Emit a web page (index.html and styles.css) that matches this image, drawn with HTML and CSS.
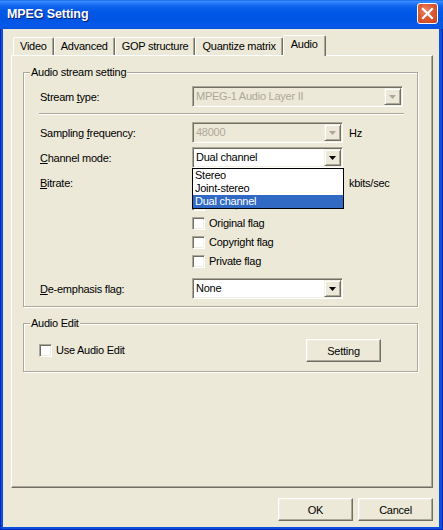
FILE: index.html
```html
<!DOCTYPE html>
<html>
<head>
<meta charset="utf-8">
<title>MPEG Setting</title>
<link rel="stylesheet" href="styles.css">
</head>
<body>
<div class="window">
  <div class="titlebar">
    <span class="title">MPEG Setting</span>
    <div class="close" aria-label="Close">
      <svg width="19" height="19" viewBox="0 0 19 19"><path d="M5 5 L14 14 M14 5 L5 14" stroke="#fff" stroke-width="2.2" stroke-linecap="square"/></svg>
    </div>
  </div>
  <div class="client">
    <div class="tabs">
      <div class="tab">Video</div>
      <div class="tab">Advanced</div>
      <div class="tab">GOP structure</div>
      <div class="tab">Quantize matrix</div>
      <div class="tab tab-active">Audio</div>
    </div>
    <div class="panel">
      <fieldset class="group group-stream">
        <legend class="legend legend-stream">Audio stream setting</legend>
        <div class="row">
          <span class="lbl">Stream <u>t</u>ype:</span>
          <div class="combo combo-wide combo-disabled">
            <span class="combo-text">MPEG-1 Audio Layer II</span>
            <span class="combo-btn"><svg class="arrow" width="7" height="4" viewBox="0 0 7 4"><path d="M0 0H7L3.5 4Z"/></svg></span>
          </div>
        </div>
        <div class="sep"></div>
        <div class="row">
          <span class="lbl">Sampling <u>f</u>requency:</span>
          <div class="combo combo-disabled">
            <span class="combo-text">48000</span>
            <span class="combo-btn"><svg class="arrow" width="7" height="4" viewBox="0 0 7 4"><path d="M0 0H7L3.5 4Z"/></svg></span>
          </div>
          <span class="unit">Hz</span>
        </div>
        <div class="row row-gap">
          <span class="lbl"><u>C</u>hannel mode:</span>
          <div class="combo">
            <span class="combo-text">Dual channel</span>
            <span class="combo-btn"><svg class="arrow" width="7" height="4" viewBox="0 0 7 4"><path d="M0 0H7L3.5 4Z"/></svg></span>
            <div class="dropdown">
              <div class="option">Stereo</div>
              <div class="option">Joint-stereo</div>
              <div class="option option-selected">Dual channel</div>
            </div>
          </div>
        </div>
        <div class="row row-gap">
          <span class="lbl"><u>B</u>itrate:</span>
          <div class="combo-space"></div>
          <span class="unit">kbits/sec</span>
        </div>
        <div class="check-row check-first">
          <span class="checkbox checkbox-disabled"></span>
          <span class="check-label check-label-disabled">Error protection</span>
        </div>
        <div class="check-row">
          <span class="checkbox"></span>
          <span class="check-label">Original flag</span>
        </div>
        <div class="check-row">
          <span class="checkbox"></span>
          <span class="check-label">Copyright flag</span>
        </div>
        <div class="check-row">
          <span class="checkbox"></span>
          <span class="check-label">Private flag</span>
        </div>
        <div class="row row-last">
          <span class="lbl"><u>D</u>e-emphasis flag:</span>
          <div class="combo">
            <span class="combo-text">None</span>
            <span class="combo-btn"><svg class="arrow" width="7" height="4" viewBox="0 0 7 4"><path d="M0 0H7L3.5 4Z"/></svg></span>
          </div>
        </div>
      </fieldset>
      <fieldset class="group group-edit">
        <legend class="legend legend-edit">Audio Edit</legend>
        <div class="edit-row">
          <span class="checkbox"></span>
          <span class="check-label">Use Audio Edit</span>
          <button class="btn btn-setting">Setting</button>
        </div>
      </fieldset>
    </div>
    <div class="actions">
      <button class="btn">OK</button>
      <button class="btn">Cancel</button>
    </div>
  </div>
</div>
</body>
</html>
```
FILE: styles.css
```css
* { box-sizing: border-box; }
html, body { margin: 0; padding: 0; }
body {
  width: 443px;
  height: 530px;
  overflow: hidden;
  font-family: "Liberation Sans", Arial, sans-serif;
  font-size: 11px;
  letter-spacing: -0.25px;
  color: #000;
  background: #0A4EE4;
}
.window {
  width: 443px;
  height: 530px;
  display: flex;
  flex-direction: column;
  background: #0B4FE2;
  box-shadow: inset 1px 0 #0028B8, inset -1px 0 #0028B8, inset 0 -1px #0028B8;
}
.titlebar {
  height: 29px;
  flex: none;
  display: flex;
  align-items: flex-start;
  padding: 0 5px 0 7px;
  background: linear-gradient(180deg, #0A5AE8 0px, #3B8FFD 1px, #2A7CF8 3px, #1064EE 6px, #0058E6 12px, #0055E3 20px, #0659EA 25px, #0A52DE 29px);
}
.title {
  margin-top: 7px;
  font-size: 12.5px;
  font-weight: bold;
  letter-spacing: -0.1px;
  color: #fff;
  line-height: 15px;
  text-shadow: 1px 1px 0 #0A1C7A;
}
.close {
  margin-left: auto;
  margin-top: 3px;
  width: 21px;
  height: 21px;
  border: 1px solid #fff;
  border-radius: 3px;
  background: radial-gradient(circle at 40% 35%, #E98A6C 0%, #DB5A34 45%, #C8401A 100%);
  display: flex;
  align-items: center;
  justify-content: center;
}
.client {
  flex: 1;
  margin: 0 4px 3px 3px;
  background: #ECE9D8;
  padding: 6px 6px 6px 8px;
  display: flex;
  flex-direction: column;
}
.tabs {
  display: flex;
  align-items: flex-end;
  padding-left: 2px;
  height: 20px;
  flex: none;
}
.tab {
  height: 18px;
  line-height: 16px;
  padding: 0 6px;
  border: 1px solid;
  border-bottom: none;
  border-color: #fff #716F64 transparent #fff;
  border-radius: 2px 2px 0 0;
  box-shadow: inset -1px 0 #ACA899;
  background: #ECE9D8;
  white-space: nowrap;
}
.tab-active {
  position: relative;
  z-index: 2;
  height: 21px;
  line-height: 17px;
  margin-bottom: -1px;
  padding: 0 7px;
}
.panel {
  flex: 1;
  border: 1px solid;
  border-color: #fff #716F64 #716F64 #fff;
  box-shadow: inset -1px -1px #ACA899;
  padding: 10px 14px 0 11px;
}
.group {
  margin: 0;
  border: 1px solid #ACA899;
  box-shadow: 1px 1px 0 #fff, inset 1px 1px 0 #fff;
  min-inline-size: 0;
}
.group-stream {
  padding: 7px 10px 7px 16px;
}
.group-edit {
  margin-top: 10px;
  padding: 9px 36px 9px 15px;
}
.legend {
  padding: 0 1px;
  line-height: 13px;
  background: #ECE9D8;
}
.legend-stream { margin-left: -10px; }
.legend-edit { margin-left: -9px; }
.row {
  display: flex;
  align-items: center;
  height: 21px;
}
.row-gap { margin-top: 4px; }
.row-last { margin-top: 10px; }
.lbl {
  width: 152px;
  flex: none;
  white-space: nowrap;
}
.sep {
  height: 2px;
  margin: 6px 0 7px -1px;
  width: 365px;
  border-top: 1px solid #ACA899;
  border-bottom: 1px solid #fff;
}
.combo {
  position: relative;
  width: 151px;
  height: 21px;
  flex: none;
  display: flex;
  align-items: stretch;
  background: #fff;
  border: 1px solid;
  border-color: #ACA899 #fff #fff #ACA899;
  box-shadow: inset 1px 1px 0 #716F64, inset -1px -1px 0 #F1EFE2;
  padding: 1px;
}
.combo-wide { width: 211px; }
.combo-disabled { background: #ECE9D8; color: #ACA899; }
.combo-space { width: 151px; height: 21px; flex: none; }
.combo-text {
  flex: 1;
  line-height: 17px;
  padding-left: 2px;
  white-space: nowrap;
  overflow: hidden;
}
.combo-btn {
  width: 17px;
  flex: none;
  display: flex;
  align-items: center;
  justify-content: center;
  background: #ECE9D8;
  border: 1px solid;
  border-color: #F1EFE2 #716F64 #716F64 #F1EFE2;
  box-shadow: inset 1px 1px 0 #fff, inset -1px -1px 0 #ACA899;
}
.arrow { fill: #000; display: block; }
.combo-disabled .arrow { fill: #ACA899; }
.unit { margin-left: 6px; white-space: nowrap; }
.dropdown {
  position: absolute;
  top: 20px;
  left: -1px;
  width: 152px;
  background: #fff;
  border: 1px solid #000;
  z-index: 5;
  color: #000;
}
.option {
  height: 13px;
  line-height: 13px;
  padding-left: 2px;
  white-space: nowrap;
}
.option-selected { background: #316AC5; color: #fff; }
.check-row {
  display: flex;
  align-items: center;
  height: 13px;
  margin-left: 152px;
  margin-top: 6px;
}
.check-first { margin-top: 5px; }
.checkbox {
  width: 13px;
  height: 13px;
  flex: none;
  background: #fff;
  border: 1px solid;
  border-color: #ACA899 #fff #fff #ACA899;
  box-shadow: inset 1px 1px 0 #716F64, inset -1px -1px 0 #F1EFE2;
}
.checkbox-disabled { background: #ECE9D8; }
.check-label {
  margin-left: 4px;
  line-height: 13px;
  white-space: nowrap;
}
.check-label-disabled { color: #ACA899; }
.edit-row {
  display: flex;
  align-items: center;
  height: 23px;
}
.btn {
  width: 75px;
  height: 23px;
  padding: 0;
  font: inherit;
  letter-spacing: inherit;
  color: #000;
  background: #ECE9D8;
  border: 1px solid;
  border-color: #fff #716F64 #716F64 #fff;
  box-shadow: inset -1px -1px 0 #ACA899, inset 1px 1px 0 #F1EFE2;
  border-radius: 0;
}
.btn-setting { margin-left: auto; }
.actions {
  display: flex;
  justify-content: flex-end;
  gap: 5px;
  margin-top: 10px;
  flex: none;
}
```
